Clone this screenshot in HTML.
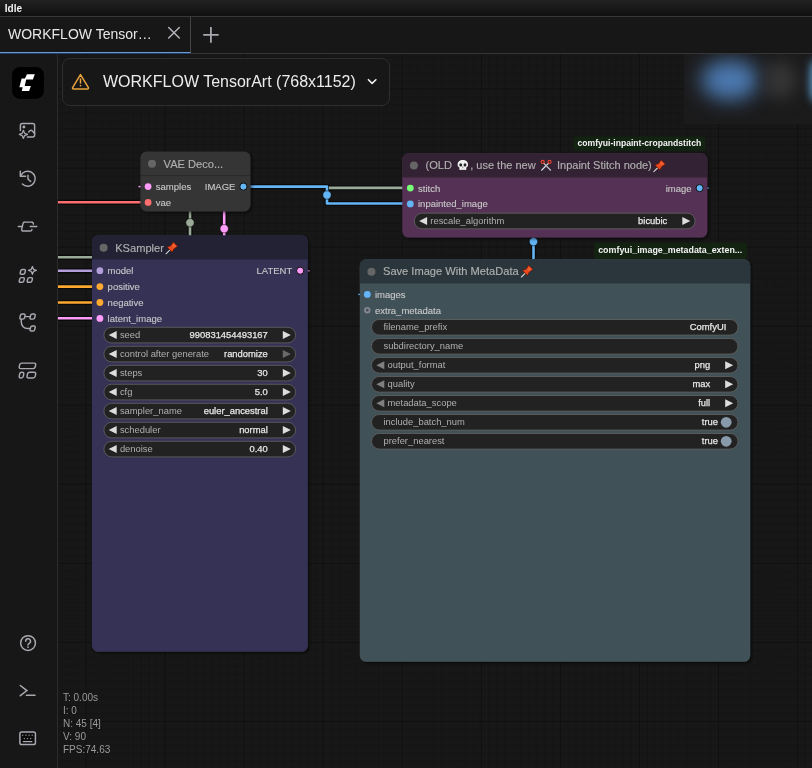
<!DOCTYPE html>
<html><head><meta charset="utf-8">
<style>
html,body{margin:0;padding:0;}
body{width:812px;height:768px;overflow:hidden;background:#161616;font-family:"Liberation Sans",sans-serif;position:relative;}
#topbar{position:absolute;left:0;top:0;width:812px;height:16px;background:linear-gradient(#212121,#1c1c1c 30%,#101010);border-bottom:1px solid #383838;}
#topbar span{position:absolute;left:4.8px;top:2.6px;font-size:10px;font-weight:bold;color:#f2f2f2;line-height:12px;}
#tabbar{position:absolute;left:0;top:17px;width:812px;height:36px;background:#171717;border-bottom:1px solid #363636;}
#tab{position:absolute;left:0;top:0;width:190px;height:35px;border-right:1px solid #454545;border-bottom:1px solid #6d99d2;box-sizing:content-box;}
#tab span{position:absolute;left:8px;top:9px;font-size:14px;color:#e8e8e8;line-height:16px;white-space:nowrap;}
#sidebar{position:absolute;left:0;top:54px;width:57px;height:714px;background:#171717;border-right:1px solid #2b2b2b;}
#canvas{position:absolute;left:0;top:0;will-change:transform;}
#bc{position:absolute;left:62px;top:58px;width:326px;height:46px;border:1px solid #2e2e2e;border-radius:8px;background:#171717;}
#bc span{position:absolute;left:40px;top:13px;font-size:16px;color:#ececec;line-height:20px;white-space:nowrap;}
#stats{position:absolute;left:63px;top:691.4px;font-size:10px;line-height:13.1px;color:#9a9a9a;white-space:pre;}
#blur{position:absolute;left:684px;top:54px;width:128px;height:70px;overflow:hidden;background:#1b1b1c;}
#blur .b1{position:absolute;left:17px;top:6px;width:58px;height:40px;border-radius:50%;background:#4c7ab2;filter:blur(10px);}
#blur .b2{position:absolute;left:80px;top:8px;width:32px;height:36px;border-radius:40%;background:#353536;filter:blur(8px);}
#blur .b3{position:absolute;left:126px;top:6px;width:12px;height:42px;border-radius:40%;background:#5a9acb;filter:blur(4px);}
#topbar,#tabbar,#bc,#stats{will-change:transform;}
#tabsh{position:absolute;left:0;top:53px;width:190px;height:1px;background:#1f406f;}
</style></head><body>
<svg id="canvas" width="812" height="768" viewBox="0 0 812 768" font-family="Liberation Sans, sans-serif">
<defs>
<pattern id="grid" x="6.6" y="1.6" width="7.905" height="7.905" patternUnits="userSpaceOnUse">
<path d="M0.5 0V7.905M0 0.5H7.905" stroke="#141414" stroke-width="1" fill="none"/>
</pattern>
<pattern id="grid2" x="6.6" y="9.5" width="79.05" height="79.05" patternUnits="userSpaceOnUse">
<path d="M0.5 0V79.05M0 0.5H79.05" stroke="#101010" stroke-width="1.1" fill="none"/>
</pattern>
<filter id="sh" x="-10%" y="-10%" width="120%" height="120%"><feDropShadow dx="1.6" dy="1.6" stdDeviation="1.4" flood-color="#000" flood-opacity="0.55"/></filter>
</defs>
<rect x="58" y="54" width="754" height="714" fill="#171717"/>
<rect x="58" y="54" width="754" height="714" fill="url(#grid)"/>
<rect x="58" y="54" width="754" height="714" fill="url(#grid2)"/>
<path d="M57 202.3H141" fill="none" stroke="#000" stroke-opacity="0.55" stroke-width="5.2" stroke-linejoin="round"/>
<path d="M57 202.3H141" fill="none" stroke="#FF6E6E" stroke-width="2.6" stroke-linejoin="round"/>
<path d="M250 186.6H327V203.5H404" fill="none" stroke="#000" stroke-opacity="0.55" stroke-width="5.2" stroke-linejoin="round"/>
<path d="M250 186.6H327V203.5H404" fill="none" stroke="#64B5F6" stroke-width="2.6" stroke-linejoin="round"/>
<path d="M329 187.9H404" fill="none" stroke="#000" stroke-opacity="0.55" stroke-width="5.2" stroke-linejoin="round"/>
<path d="M329 187.9H404" fill="none" stroke="#99AA99" stroke-width="2.6" stroke-linejoin="round"/>
<path d="M190 205V240" fill="none" stroke="#000" stroke-opacity="0.55" stroke-width="5.2" stroke-linejoin="round"/>
<path d="M190 205V240" fill="none" stroke="#99AA99" stroke-width="2.6" stroke-linejoin="round"/>
<path d="M224.2 205V240" fill="none" stroke="#000" stroke-opacity="0.55" stroke-width="5.2" stroke-linejoin="round"/>
<path d="M224.2 205V240" fill="none" stroke="#FF9CF9" stroke-width="2.6" stroke-linejoin="round"/>
<path d="M57 257.3H94" fill="none" stroke="#000" stroke-opacity="0.55" stroke-width="5.2" stroke-linejoin="round"/>
<path d="M57 257.3H94" fill="none" stroke="#99AA99" stroke-width="2.6" stroke-linejoin="round"/>
<path d="M57 270.8H96" fill="none" stroke="#000" stroke-opacity="0.55" stroke-width="5.2" stroke-linejoin="round"/>
<path d="M57 270.8H96" fill="none" stroke="#B39DDB" stroke-width="2.6" stroke-linejoin="round"/>
<path d="M57 286.6H96" fill="none" stroke="#000" stroke-opacity="0.55" stroke-width="5.2" stroke-linejoin="round"/>
<path d="M57 286.6H96" fill="none" stroke="#FFA931" stroke-width="2.6" stroke-linejoin="round"/>
<path d="M57 302.5H96" fill="none" stroke="#000" stroke-opacity="0.55" stroke-width="5.2" stroke-linejoin="round"/>
<path d="M57 302.5H96" fill="none" stroke="#FFA931" stroke-width="2.6" stroke-linejoin="round"/>
<path d="M57 318.3H96" fill="none" stroke="#000" stroke-opacity="0.55" stroke-width="5.2" stroke-linejoin="round"/>
<path d="M57 318.3H96" fill="none" stroke="#FF9CF9" stroke-width="2.6" stroke-linejoin="round"/>
<path d="M533.5 236V262" fill="none" stroke="#000" stroke-opacity="0.55" stroke-width="5.2" stroke-linejoin="round"/>
<path d="M533.5 236V262" fill="none" stroke="#64B5F6" stroke-width="2.6" stroke-linejoin="round"/>
<path d="M306 270.8H309.6" fill="none" stroke="#000" stroke-opacity="0.55" stroke-width="4.1" stroke-linejoin="round"/>
<path d="M306 270.8H309.6" fill="none" stroke="#FF9CF9" stroke-width="1.5" stroke-linejoin="round"/>
<path d="M705 188.1H709" fill="none" stroke="#000" stroke-opacity="0.55" stroke-width="4.1" stroke-linejoin="round"/>
<path d="M705 188.1H709" fill="none" stroke="#64B5F6" stroke-width="1.5" stroke-linejoin="round"/>
<path d="M358.2 294.4H361" fill="none" stroke="#000" stroke-opacity="0.55" stroke-width="4.0" stroke-linejoin="round"/>
<path d="M358.2 294.4H361" fill="none" stroke="#64B5F6" stroke-width="1.4" stroke-linejoin="round"/>
<path d="M138.5 186.6H142" fill="none" stroke="#000" stroke-opacity="0.55" stroke-width="4.2" stroke-linejoin="round"/>
<path d="M138.5 186.6H142" fill="none" stroke="#FF9CF9" stroke-width="1.6" stroke-linejoin="round"/>
<g filter="url(#sh)"><rect x="140.4" y="151.4" width="110" height="60" rx="6.3" fill="#353535"/></g>
<rect x="140.4" y="175.1" width="110" height="1" fill="#000" opacity="0.25"/>
<circle cx="152.0" cy="163.8" r="4" fill="#666"/>
<text x="163.6" y="167.5" font-size="11.1" fill="#b0b0b0" stroke="#b0b0b0" stroke-width="0.15">VAE Deco...</text>
<circle cx="148.1" cy="186.6" r="3.4" fill="#FF9CF9"/>
<text x="155.79999999999998" y="190.0" font-size="9.5" fill="#c8c8c8" stroke="#c8c8c8" stroke-width="0.12">samples</text>
<circle cx="148.1" cy="202.4" r="3.4" fill="#FF6E6E"/>
<text x="155.79999999999998" y="205.8" font-size="9.5" fill="#c8c8c8" stroke="#c8c8c8" stroke-width="0.12">vae</text>
<circle cx="243.4" cy="186.6" r="3.6" fill="#64B5F6" stroke="#0d0d0d" stroke-width="1"/>
<text x="235.4" y="190.0" font-size="9.5" fill="#c8c8c8" stroke="#c8c8c8" stroke-width="0.12" text-anchor="end">IMAGE</text>
<circle cx="190" cy="222.7" r="4.2" fill="#99AA99" stroke="#000" stroke-opacity="0.5" stroke-width="1"/>
<circle cx="224.2" cy="228.7" r="4.2" fill="#FF9CF9" stroke="#000" stroke-opacity="0.5" stroke-width="1"/>
<circle cx="327" cy="195" r="4.2" fill="#64B5F6" stroke="#000" stroke-opacity="0.5" stroke-width="1"/>
<circle cx="533.5" cy="241.6" r="4.2" fill="#64B5F6" stroke="#000" stroke-opacity="0.5" stroke-width="1"/>
<g filter="url(#sh)"><rect x="92.0" y="235.4" width="215.8" height="416.4" rx="6.3" fill="#343356"/></g>
<path d="M92.0 259.6V241.70000000000002a6.3 6.3 0 0 1 6.3 -6.3H301.5a6.3 6.3 0 0 1 6.3 6.3V259.6Z" fill="#232234"/>
<circle cx="103.6" cy="247.8" r="4" fill="#666"/>
<text x="115.2" y="251.50000000000003" font-size="11.1" fill="#b0b0b0" stroke="#b0b0b0" stroke-width="0.15">KSampler</text>
<g transform="translate(165.8 242.1) scale(1.0)"><path d="M3.9 8.1L0.2 11.7" stroke="#d4d4d4" stroke-width="1.05" stroke-linecap="round"/><path d="M7.5 0L11.8 4.2L8.1 6.8L6.3 10.1L1.3 5.1L5.1 3.6Z" fill="#e8491d" stroke="#6a1509" stroke-width="0.7" stroke-linejoin="round"/><path d="M7.6 1.2L10.5 4.100L8 5.600L6.200 3.900Z" fill="#f2602f"/></g>
<circle cx="99.9" cy="270.7" r="3.4" fill="#B39DDB"/>
<text x="107.60000000000001" y="274.09999999999997" font-size="9.5" fill="#c8c8c8" stroke="#c8c8c8" stroke-width="0.12">model</text>
<circle cx="99.9" cy="286.59999999999997" r="3.4" fill="#FFA931"/>
<text x="107.60000000000001" y="289.99999999999994" font-size="9.5" fill="#c8c8c8" stroke="#c8c8c8" stroke-width="0.12">positive</text>
<circle cx="99.9" cy="302.5" r="3.4" fill="#FFA931"/>
<text x="107.60000000000001" y="305.9" font-size="9.5" fill="#c8c8c8" stroke="#c8c8c8" stroke-width="0.12">negative</text>
<circle cx="99.9" cy="318.4" r="3.4" fill="#FF9CF9"/>
<text x="107.60000000000001" y="321.79999999999995" font-size="9.5" fill="#c8c8c8" stroke="#c8c8c8" stroke-width="0.12">latent_image</text>
<circle cx="300.2" cy="270.7" r="3.6" fill="#FF9CF9" stroke="#0d0d0d" stroke-width="1"/>
<text x="292.2" y="274.09999999999997" font-size="9.5" fill="#c8c8c8" stroke="#c8c8c8" stroke-width="0.12" text-anchor="end">LATENT</text>
<rect x="103.9" y="327.3" width="191.7" height="15.6" rx="7.8" fill="#222" stroke="#5e5e5e" stroke-width="0.9"/>
<path d="M116.7 331.1L108.7 335.1L116.7 339.1Z" fill="#ddd"/>
<path d="M282.8 331.1L290.8 335.1L282.8 339.1Z" fill="#ddd"/>
<text x="119.9" y="337.90000000000003" font-size="9.4" fill="#b0b0b0">seed</text>
<text x="267.8" y="337.90000000000003" font-size="9.4" fill="#e6e6e6" text-anchor="end" stroke="#e6e6e6" stroke-width="0.25">990831454493167</text>
<rect x="103.9" y="346.3" width="191.7" height="15.6" rx="7.8" fill="#222" stroke="#5e5e5e" stroke-width="0.9"/>
<path d="M116.7 350.1L108.7 354.1L116.7 358.1Z" fill="#ddd"/>
<path d="M282.8 350.1L290.8 354.1L282.8 358.1Z" fill="#6a6a6a"/>
<text x="119.9" y="356.90000000000003" font-size="9.4" fill="#b0b0b0">control after generate</text>
<text x="267.8" y="356.90000000000003" font-size="9.4" fill="#e6e6e6" text-anchor="end" stroke="#e6e6e6" stroke-width="0.25">randomize</text>
<rect x="103.9" y="365.3" width="191.7" height="15.6" rx="7.8" fill="#222" stroke="#5e5e5e" stroke-width="0.9"/>
<path d="M116.7 369.1L108.7 373.1L116.7 377.1Z" fill="#ddd"/>
<path d="M282.8 369.1L290.8 373.1L282.8 377.1Z" fill="#ddd"/>
<text x="119.9" y="375.90000000000003" font-size="9.4" fill="#b0b0b0">steps</text>
<text x="267.8" y="375.90000000000003" font-size="9.4" fill="#e6e6e6" text-anchor="end" stroke="#e6e6e6" stroke-width="0.25">30</text>
<rect x="103.9" y="384.3" width="191.7" height="15.6" rx="7.8" fill="#222" stroke="#5e5e5e" stroke-width="0.9"/>
<path d="M116.7 388.1L108.7 392.1L116.7 396.1Z" fill="#ddd"/>
<path d="M282.8 388.1L290.8 392.1L282.8 396.1Z" fill="#ddd"/>
<text x="119.9" y="394.90000000000003" font-size="9.4" fill="#b0b0b0">cfg</text>
<text x="267.8" y="394.90000000000003" font-size="9.4" fill="#e6e6e6" text-anchor="end" stroke="#e6e6e6" stroke-width="0.25">5.0</text>
<rect x="103.9" y="403.3" width="191.7" height="15.6" rx="7.8" fill="#222" stroke="#5e5e5e" stroke-width="0.9"/>
<path d="M116.7 407.1L108.7 411.1L116.7 415.1Z" fill="#ddd"/>
<path d="M282.8 407.1L290.8 411.1L282.8 415.1Z" fill="#ddd"/>
<text x="119.9" y="413.90000000000003" font-size="9.4" fill="#b0b0b0">sampler_name</text>
<text x="267.8" y="413.90000000000003" font-size="9.4" fill="#e6e6e6" text-anchor="end" stroke="#e6e6e6" stroke-width="0.25">euler_ancestral</text>
<rect x="103.9" y="422.3" width="191.7" height="15.6" rx="7.8" fill="#222" stroke="#5e5e5e" stroke-width="0.9"/>
<path d="M116.7 426.1L108.7 430.1L116.7 434.1Z" fill="#ddd"/>
<path d="M282.8 426.1L290.8 430.1L282.8 434.1Z" fill="#ddd"/>
<text x="119.9" y="432.90000000000003" font-size="9.4" fill="#b0b0b0">scheduler</text>
<text x="267.8" y="432.90000000000003" font-size="9.4" fill="#e6e6e6" text-anchor="end" stroke="#e6e6e6" stroke-width="0.25">normal</text>
<rect x="103.9" y="441.3" width="191.7" height="15.6" rx="7.8" fill="#222" stroke="#5e5e5e" stroke-width="0.9"/>
<path d="M116.7 445.1L108.7 449.1L116.7 453.1Z" fill="#ddd"/>
<path d="M282.8 445.1L290.8 449.1L282.8 453.1Z" fill="#ddd"/>
<text x="119.9" y="451.90000000000003" font-size="9.4" fill="#b0b0b0">denoise</text>
<text x="267.8" y="451.90000000000003" font-size="9.4" fill="#e6e6e6" text-anchor="end" stroke="#e6e6e6" stroke-width="0.25">0.40</text>
<g filter="url(#sh)"><rect x="402.3" y="153.2" width="305" height="84.4" rx="6.3" fill="#553355"/></g>
<path d="M402.3 177.39999999999998V159.5a6.3 6.3 0 0 1 6.3 -6.3H701.0a6.3 6.3 0 0 1 6.3 6.3V177.39999999999998Z" fill="#332233"/>
<circle cx="413.90000000000003" cy="165.6" r="4" fill="#666"/>
<text x="425.5" y="169.29999999999998" font-size="11.1" fill="#b0b0b0" stroke="#b0b0b0" stroke-width="0.15">(OLD</text>
<text x="470.2" y="169.3" font-size="11" fill="#b0b0b0" stroke="#b0b0b0" stroke-width="0.15">, use the new</text>
<text x="557" y="169.3" font-size="11" fill="#b0b0b0" stroke="#b0b0b0" stroke-width="0.15">Inpaint Stitch node)</text>
<g transform="translate(457.4 159.9)"><path d="M5.45 0C2.3 0 0.2 2.1 0.2 4.6C0.2 6.1 0.9 7.1 2 7.7V9.3Q2 10.2 2.9 10.2H8Q8.9 10.2 8.9 9.3V7.7C10 7.1 10.7 6.1 10.7 4.600C10.7 2.1 8.6 0 5.45 0Z" fill="#f1f1f1"/><ellipse cx="3.3" cy="5" rx="1.45" ry="1.6" fill="#222"/><ellipse cx="7.6" cy="5" rx="1.45" ry="1.6" fill="#222"/><path d="M5.45 6.4L4.8 7.7H6.1Z" fill="#222"/><path d="M4.1 8.8V10.2M5.45 8.8V10.2M6.8 8.8V10.2" stroke="#999" stroke-width="0.5"/></g>
<g transform="translate(540.6 159.8)" fill="none"><path d="M3.2 3.6L9.9 10.3" stroke="#cfd3d6" stroke-width="1.3" stroke-linecap="round"/><path d="M7.8 3.6L1.1 10.3" stroke="#e6e9eb" stroke-width="1.3" stroke-linecap="round"/><circle cx="2.1" cy="2.1" r="1.55" stroke="#e8412c" stroke-width="1.2"/><circle cx="8.9" cy="2.1" r="1.55" stroke="#e8412c" stroke-width="1.2"/><circle cx="5.5" cy="5.9" r="0.5" fill="#555"/></g>
<g transform="translate(653.6 159.9) scale(1.0)"><path d="M3.9 8.1L0.2 11.7" stroke="#d4d4d4" stroke-width="1.05" stroke-linecap="round"/><path d="M7.5 0L11.8 4.2L8.1 6.8L6.3 10.1L1.3 5.1L5.1 3.6Z" fill="#e8491d" stroke="#6a1509" stroke-width="0.7" stroke-linejoin="round"/><path d="M7.6 1.2L10.5 4.100L8 5.600L6.200 3.900Z" fill="#f2602f"/></g>
<circle cx="410.3" cy="188.1" r="3.4" fill="#77FF77"/>
<text x="418.0" y="191.5" font-size="9.5" fill="#c8c8c8" stroke="#c8c8c8" stroke-width="0.12">stitch</text>
<circle cx="410.3" cy="203.9" r="3.4" fill="#64B5F6"/>
<text x="418.0" y="207.3" font-size="9.5" fill="#c8c8c8" stroke="#c8c8c8" stroke-width="0.12">inpainted_image</text>
<circle cx="699.6" cy="188.1" r="3.6" fill="#64B5F6" stroke="#0d0d0d" stroke-width="1"/>
<text x="691.6" y="191.5" font-size="9.5" fill="#c8c8c8" stroke="#c8c8c8" stroke-width="0.12" text-anchor="end">image</text>
<rect x="414.3" y="213.2" width="280.8" height="15.6" rx="7.8" fill="#222" stroke="#5e5e5e" stroke-width="0.9"/>
<path d="M427.1 217.0L419.1 221.0L427.1 225.0Z" fill="#ddd"/>
<path d="M682.3000000000001 217.0L690.3000000000001 221.0L682.3000000000001 225.0Z" fill="#ddd"/>
<text x="430.3" y="223.8" font-size="9.4" fill="#b0b0b0">rescale_algorithm</text>
<text x="667.3000000000001" y="223.8" font-size="9.4" fill="#e6e6e6" text-anchor="end" stroke="#e6e6e6" stroke-width="0.25">bicubic</text>
<g filter="url(#sh)"><rect x="359.8" y="259.3" width="390.4" height="402.5" rx="6.3" fill="#3f5159"/></g>
<path d="M359.8 283.5V265.6a6.3 6.3 0 0 1 6.3 -6.3H743.9000000000001a6.3 6.3 0 0 1 6.3 6.3V283.5Z" fill="#2a363b"/>
<circle cx="371.40000000000003" cy="271.70000000000005" r="4" fill="#666"/>
<text x="383.0" y="274.7" font-size="11.1" fill="#b0b0b0" stroke="#b0b0b0" stroke-width="0.15">Save Image With MetaData</text>
<g transform="translate(521.2 265.3) scale(1.0)"><path d="M3.9 8.1L0.2 11.7" stroke="#d4d4d4" stroke-width="1.05" stroke-linecap="round"/><path d="M7.5 0L11.8 4.2L8.1 6.8L6.3 10.1L1.3 5.1L5.1 3.6Z" fill="#e8491d" stroke="#6a1509" stroke-width="0.7" stroke-linejoin="round"/><path d="M7.6 1.2L10.5 4.100L8 5.600L6.200 3.900Z" fill="#f2602f"/></g>
<circle cx="367.3" cy="294.4" r="3.4" fill="#64B5F6"/>
<text x="375.0" y="297.79999999999995" font-size="9.5" fill="#c8c8c8" stroke="#c8c8c8" stroke-width="0.12">images</text>
<circle cx="367.3" cy="310.2" r="2.3" fill="none" stroke="#85858f" stroke-width="1.9"/>
<text x="375.0" y="313.59999999999997" font-size="9.5" fill="#c8c8c8" stroke="#c8c8c8" stroke-width="0.12">extra_metadata</text>
<rect x="371.5" y="319.5" width="366.5" height="15.6" rx="7.8" fill="#222" stroke="#5e5e5e" stroke-width="0.9"/>
<text x="383.5" y="330.1" font-size="9.4" fill="#b0b0b0">filename_prefix</text>
<text x="726.3" y="330.1" font-size="9.4" fill="#e6e6e6" text-anchor="end" stroke="#e6e6e6" stroke-width="0.25">ComfyUI</text>
<rect x="371.5" y="338.5" width="366.5" height="15.6" rx="7.8" fill="#222" stroke="#5e5e5e" stroke-width="0.9"/>
<text x="383.5" y="349.1" font-size="9.4" fill="#b0b0b0">subdirectory_name</text>
<rect x="371.5" y="357.5" width="366.5" height="15.6" rx="7.8" fill="#222" stroke="#5e5e5e" stroke-width="0.9"/>
<path d="M384.3 361.3L376.3 365.3L384.3 369.3Z" fill="#808080"/>
<path d="M725.2 361.3L733.2 365.3L725.2 369.3Z" fill="#ddd"/>
<text x="387.5" y="368.1" font-size="9.4" fill="#b0b0b0">output_format</text>
<text x="710.2" y="368.1" font-size="9.4" fill="#e6e6e6" text-anchor="end" stroke="#e6e6e6" stroke-width="0.25">png</text>
<rect x="371.5" y="376.5" width="366.5" height="15.6" rx="7.8" fill="#222" stroke="#5e5e5e" stroke-width="0.9"/>
<path d="M384.3 380.3L376.3 384.3L384.3 388.3Z" fill="#808080"/>
<path d="M725.2 380.3L733.2 384.3L725.2 388.3Z" fill="#ddd"/>
<text x="387.5" y="387.1" font-size="9.4" fill="#b0b0b0">quality</text>
<text x="710.2" y="387.1" font-size="9.4" fill="#e6e6e6" text-anchor="end" stroke="#e6e6e6" stroke-width="0.25">max</text>
<rect x="371.5" y="395.5" width="366.5" height="15.6" rx="7.8" fill="#222" stroke="#5e5e5e" stroke-width="0.9"/>
<path d="M384.3 399.3L376.3 403.3L384.3 407.3Z" fill="#808080"/>
<path d="M725.2 399.3L733.2 403.3L725.2 407.3Z" fill="#ddd"/>
<text x="387.5" y="406.1" font-size="9.4" fill="#b0b0b0">metadata_scope</text>
<text x="710.2" y="406.1" font-size="9.4" fill="#e6e6e6" text-anchor="end" stroke="#e6e6e6" stroke-width="0.25">full</text>
<rect x="371.5" y="414.5" width="366.5" height="15.6" rx="7.8" fill="#222" stroke="#5e5e5e" stroke-width="0.9"/>
<text x="383.5" y="425.1" font-size="9.4" fill="#b0b0b0">include_batch_num</text>
<circle cx="726.2" cy="422.3" r="5.4" fill="#8899aa"/>
<text x="718.0" y="425.1" font-size="9.4" fill="#e6e6e6" text-anchor="end" stroke="#e6e6e6" stroke-width="0.25">true</text>
<rect x="371.5" y="433.5" width="366.5" height="15.6" rx="7.8" fill="#222" stroke="#5e5e5e" stroke-width="0.9"/>
<text x="383.5" y="444.1" font-size="9.4" fill="#b0b0b0">prefer_nearest</text>
<circle cx="726.2" cy="441.3" r="5.4" fill="#8899aa"/>
<text x="718.0" y="444.1" font-size="9.4" fill="#e6e6e6" text-anchor="end" stroke="#e6e6e6" stroke-width="0.25">true</text>
<rect x="573.3" y="136.4" width="132.2" height="14.3" rx="3" fill="#122312"/>
<text x="577.5" y="146.1" font-size="8.6" font-weight="bold" fill="#f4f4f4">comfyui-inpaint-cropandstitch</text>
<rect x="594" y="242.4" width="153" height="16.5" rx="3" fill="#122312"/>
<text x="598.2" y="252.6" font-size="8.9" font-weight="bold" fill="#f4f4f4">comfyui_image_metadata_exten...</text>
</svg>
<div id="blur"><div class="b1"></div><div class="b2"></div><div class="b3"></div></div>
<div id="topbar"><span>Idle</span></div>
<div id="tabbar"><div id="tab"><span>WORKFLOW Tensor…</span></div></div>
<div id="tabsh"></div>
<div id="sidebar"></div>
<div id="bc"><span>WORKFLOW TensorArt (768x1152)</span></div>
<svg id="chrome" width="812" height="768" viewBox="0 0 812 768" style="position:absolute;left:0;top:0" fill="none" stroke-linecap="round" stroke-linejoin="round">
<!-- tab close / plus -->
<path d="M168.7 27.4L179.3 38M179.3 27.4L168.7 38" stroke="#b4b4bc" stroke-width="1.45"/>
<path d="M203.2 34.9H218.7M210.9 27.1V42.7" stroke="#a8a8b0" stroke-width="1.8" stroke-linecap="butt"/>
<!-- warning -->
<path d="M80.5 74.6L88.4 87.7a0.9 0.9 0 0 1-0.8 1.3H73.4a0.9 0.9 0 0 1-0.8-1.3L80.5 74.6Z" stroke="#e9a23b" stroke-width="1.5"/>
<path d="M80.5 78.9V83" stroke="#e9a23b" stroke-width="1.5"/><circle cx="80.5" cy="85.6" r="0.85" fill="#e9a23b"/>
<!-- chevron -->
<path d="M368.4 79.7L372.1 83.4L375.9 79.7" stroke="#f0f0f0" stroke-width="1.6"/>
<!-- logo -->
<rect x="12.1" y="66.9" width="31.8" height="32" rx="8" fill="#000"/>
<path d="M27 74.2H34.8L32.9 79.4H26.2L24.7 86H30.9L29.1 91.1H21.8L22.6 87.3H19.4L21.6 78.6H24.9Z" fill="#fff" stroke="none"/>
<g stroke="#a9a9b1" stroke-width="1.45">
<!-- icon1: image sparkle -->
<path d="M20.4 130.6V125.3a1.9 1.9 0 0 1 1.9-1.9H32.7a1.9 1.9 0 0 1 1.9 1.9V135a1.9 1.9 0 0 1-1.9 1.9H27.4"/>
<circle cx="23.9" cy="126.9" r="0.75" fill="#a9a9b1"/>
<path d="M28.7 131.9L29.9 130.7a1.6 1.6 0 0 1 2.2 0L34.6 133.4"/>
<path d="M23.4 130.3L24.6 133.2L27.5 134.4L24.6 135.6L23.4 138.5L22.2 135.6L19.3 134.4L22.2 133.2Z" stroke-width="1.2"/>
<!-- icon2: history -->
<path d="M20.3 171.3V176.2H25.6"/>
<path d="M20.7 176A7.5 7.5 0 1 1 22.4 184"/>
<path d="M28 175.2V179.3L30.7 181.4"/>
<!-- icon3: comfy node -->
<path d="M18.3 226.5H21.7M30.2 226.5H36.8"/>
<path d="M33.3 224a1.6 1.6 0 0 0 -1.6 -1.9H24.9a1.9 1.9 0 0 0 -1.9 1.5L21.7 229.2a1.5 1.5 0 0 0 1.5 1.9H30.2a2 2 0 0 0 1.8 -1.5"/>
<!-- icon4 -->
<path d="M20.66 270.96Q21.00 269.50 22.50 269.50L24.20 269.50Q25.70 269.50 25.36 270.96L24.94 272.74Q24.60 274.20 23.10 274.20L21.40 274.20Q19.90 274.20 20.24 272.74Z"/>
<path d="M19.66 279.06Q20.00 277.60 21.50 277.60L23.10 277.60Q24.60 277.60 24.26 279.06L23.84 280.84Q23.50 282.30 22.00 282.30L20.40 282.30Q18.90 282.30 19.24 280.84Z"/>
<path d="M27.66 279.06Q28.00 277.60 29.50 277.60L31.20 277.60Q32.70 277.60 32.36 279.06L31.94 280.84Q31.60 282.30 30.10 282.30L28.40 282.30Q26.90 282.30 27.24 280.84Z"/>
<path d="M32.4 266.5L33.5 269.3L36.3 270.4L33.5 271.5L32.4 274.3L31.3 271.5L28.5 270.4L31.3 269.3Z" stroke-width="1.3"/>
<!-- icon5 -->
<path d="M20.38 315.47Q20.70 314.00 22.20 314.00L23.90 314.00Q25.40 314.00 25.08 315.47L24.62 317.63Q24.30 319.10 22.80 319.10L21.10 319.10Q19.60 319.10 19.92 317.63Z"/>
<path d="M30.58 315.47Q30.90 314.00 32.40 314.00L34.00 314.00Q35.50 314.00 35.18 315.47L34.72 317.63Q34.40 319.10 32.90 319.10L31.30 319.10Q29.80 319.10 30.12 317.63Z"/>
<path d="M30.58 327.46Q30.90 326.00 32.40 326.00L34.00 326.00Q35.50 326.00 35.18 327.46L34.72 329.54Q34.40 331.00 32.90 331.00L31.30 331.00Q29.80 331.00 30.12 329.54Z"/>
<path d="M25.6 316.6H29.6M21.3 319.4V322.3a6.2 6.2 0 0 0 6.2 6.2H29.6"/>
<!-- icon6 -->
<path d="M19.63 364.96Q20.00 363.10 21.90 363.10L34.10 363.10Q36.00 363.10 35.63 364.96L35.27 366.74Q34.90 368.60 33.00 368.60L20.80 368.60Q18.90 368.60 19.27 366.74Z"/>
<path d="M19.65 374.07Q20.00 372.20 21.90 372.20L22.20 372.20Q24.10 372.20 23.75 374.07L23.35 376.13Q23.00 378.00 21.10 378.00L20.80 378.00Q18.90 378.00 19.25 376.13Z"/>
<path d="M27.45 374.07Q27.80 372.20 29.70 372.20L34.10 372.20Q36.00 372.20 35.65 374.07L35.25 376.13Q34.90 378.00 33.00 378.00L28.60 378.00Q26.70 378.00 27.05 376.13Z"/>
<!-- help -->
<circle cx="28.05" cy="643.05" r="7.4" stroke-width="1.5"/>
<path d="M25.700 641.200a2.400 2.400 0 1 1 3.500 2.100c-0.800 0.500-1.200 1-1.200 1.800" stroke-width="1.5"/>
<circle cx="28" cy="647.100" r="0.900" fill="#a9a9b1" stroke="none"/>
<!-- terminal -->
<path d="M20.300 685.500L26.900 690.600L20.300 695.700M26.400 695.300H35" stroke-width="1.500" stroke-linejoin="miter"/>
<!-- keyboard -->
<rect x="19.900" y="732" width="15.500" height="12.600" rx="1.800" fill="#0c0c0c" stroke-width="1.500"/>
<path d="M22.700 735.200h0.010M25.900 735.200h0.010M29.100 735.200h0.010M32.200 735.200h0.010M24.300 738.600h0.010M27.500 738.600h0.010M30.700 738.600h0.010" stroke-width="1.300"/>
<path d="M23.400 741.700H31.800" stroke-width="1.300"/>
</g>
</svg>
<div id="stats">T: 0.00s
I: 0
N: 45 [4]
V: 90
FPS:74.63</div>
</body></html>
